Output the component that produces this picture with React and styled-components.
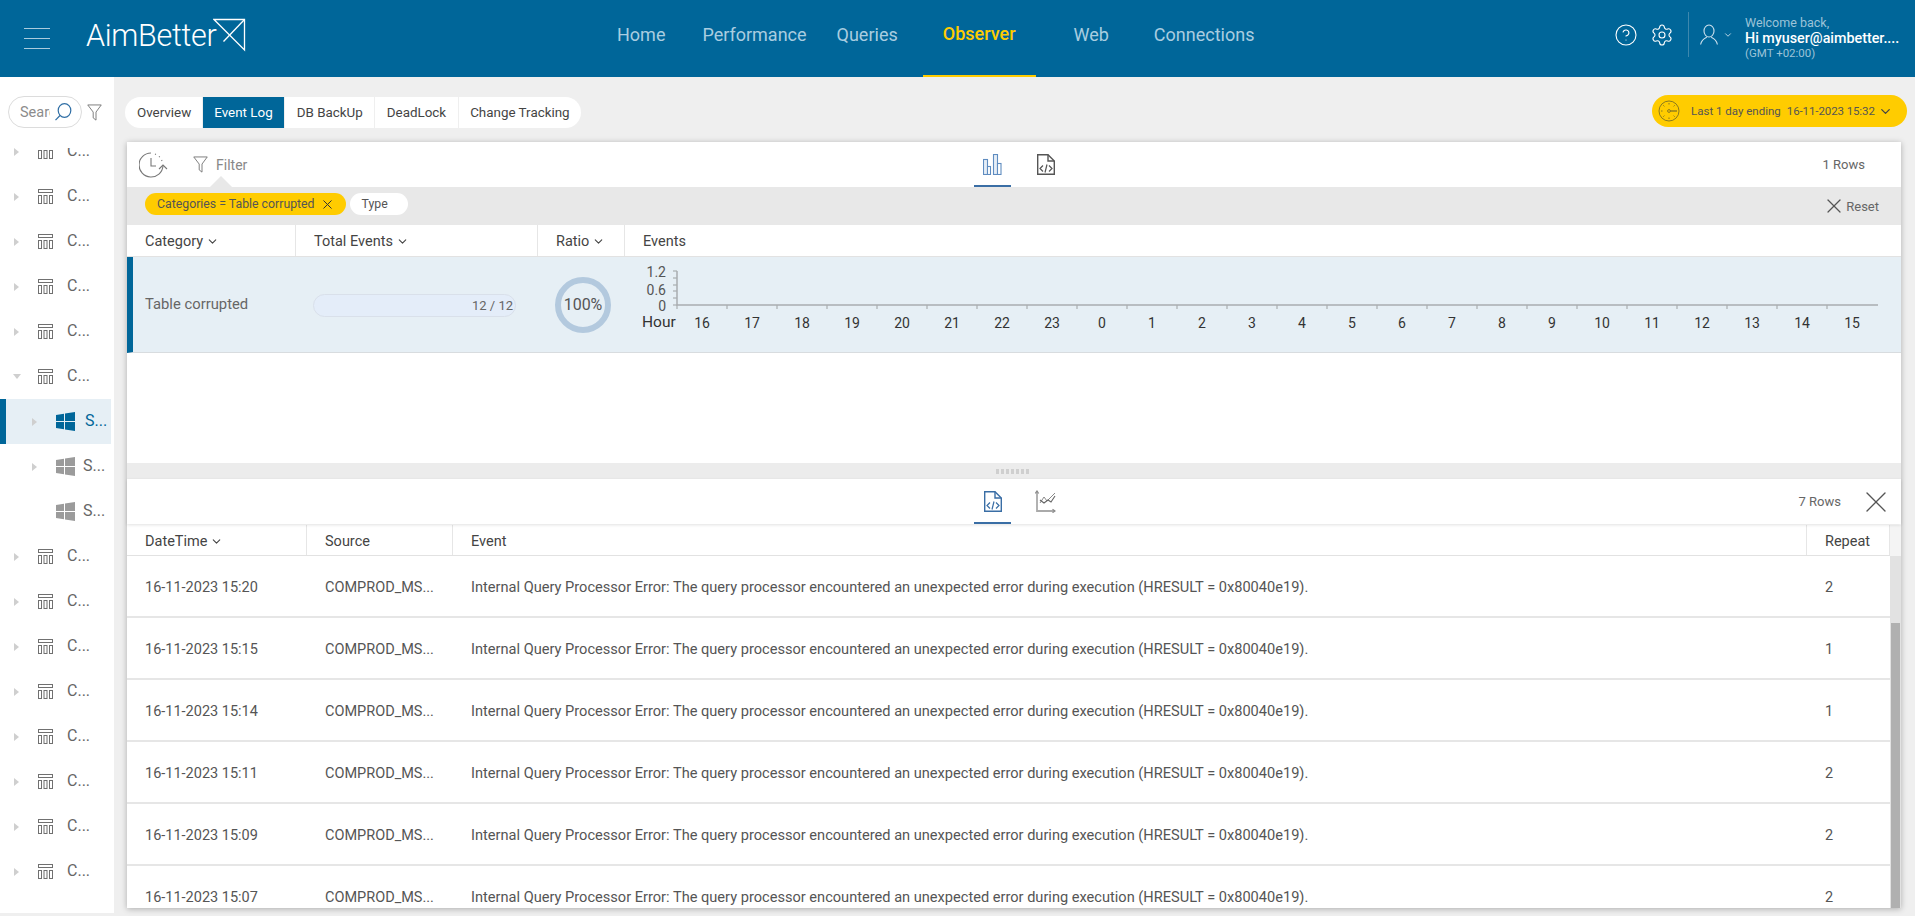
import React from 'react'
import styled, { createGlobalStyle } from 'styled-components'
import { CircleHelp, Settings, ChevronDown, X } from 'lucide-react'

const navLinks = [
  { text: 'Home', gap: 0 },
  { text: 'Performance', gap: 37 },
  { text: 'Queries', gap: 30 },
  { text: 'Observer', gap: 25, active: true },
  { text: 'Web', gap: 38 },
  { text: 'Connections', gap: 45 },
]

const subTabs = ['Overview', 'Event Log', 'DB BackUp', 'DeadLock', 'Change Tracking']
const hours = [16, 17, 18, 19, 20, 21, 22, 23, 0, 1, 2, 3, 4, 5, 6, 7, 8, 9, 10, 11, 12, 13, 14, 15]

const treeRows = [
  { label: 'C...', kind: 'group', arrow: 'right' },
  { label: 'C...', kind: 'group', arrow: 'right' },
  { label: 'C...', kind: 'group', arrow: 'right' },
  { label: 'C...', kind: 'group', arrow: 'right' },
  { label: 'C...', kind: 'group', arrow: 'right' },
  { label: 'C...', kind: 'group', arrow: 'down' },
  { label: 'S...', kind: 'server', arrow: 'right', selected: true },
  { label: 'S...', kind: 'server', arrow: 'right' },
  { label: 'S...', kind: 'server' },
  { label: 'C...', kind: 'group', arrow: 'right' },
  { label: 'C...', kind: 'group', arrow: 'right' },
  { label: 'C...', kind: 'group', arrow: 'right' },
  { label: 'C...', kind: 'group', arrow: 'right' },
  { label: 'C...', kind: 'group', arrow: 'right' },
  { label: 'C...', kind: 'group', arrow: 'right' },
  { label: 'C...', kind: 'group', arrow: 'right' },
  { label: 'C...', kind: 'group', arrow: 'right' },
]

const eventRows = [
  { time: '16-11-2023 15:20', repeat: 2 },
  { time: '16-11-2023 15:15', repeat: 1 },
  { time: '16-11-2023 15:14', repeat: 1 },
  { time: '16-11-2023 15:11', repeat: 2 },
  { time: '16-11-2023 15:09', repeat: 2 },
  { time: '16-11-2023 15:07', repeat: 2 },
]

const eventText =
  'Internal Query Processor Error: The query processor encountered an unexpected error during execution (HRESULT = 0x80040e19).'

const LogoMark = () => (
  <svg width="33" height="34" viewBox="0 0 33 34" fill="none" stroke="#fff" strokeWidth="1.3">
    <path d="M1 1.5 H31.5 V32 L1 1.5 Z" />
    <path d="M31.5 1.5 L10.5 23.5" />
  </svg>
)

const GroupIcon = () => (
  <svg width="15" height="15" viewBox="0 0 15 15" fill="none" stroke="#707070" strokeWidth="1">
    <rect x="0.5" y="0.5" width="14" height="3" />
    <rect x="0.5" y="6.5" width="3" height="8" />
    <rect x="6" y="6.5" width="3" height="8" />
    <rect x="11.5" y="6.5" width="3" height="8" />
  </svg>
)

const WindowsIcon = ({ color }) => (
  <svg width="19" height="19" viewBox="0 0 19 19" fill={color}>
    <path d="M0 3 L8 1.8 V9 H0 Z" />
    <path d="M9 1.6 L19 0 V9 H9 Z" />
    <path d="M0 10 H8 V17.2 L0 16 Z" />
    <path d="M9 10 H19 V19 L9 17.4 Z" />
  </svg>
)

const FunnelIcon = ({ size = 16 }) => (
  <svg width={size} height={size * 1.15} viewBox="0 0 16 18" fill="none" stroke="#777" strokeWidth="1">
    <path d="M0.8 0.8 H15.2 L9.6 8.4 V17 L6.6 14.6 V8.4 Z" />
  </svg>
)

const SearchIcon = () => (
  <svg width="18" height="18" viewBox="0 0 18 18" fill="none" stroke="#2f6ea5" strokeWidth="1.2">
    <ellipse cx="10.5" cy="7.5" rx="6.3" ry="6.8" />
    <path d="M6 12.5 L1.5 17.2" />
  </svg>
)

const HistoryIcon = () => (
  <svg width="29" height="26" viewBox="0 0 29 26" fill="none" stroke="#777" strokeWidth="1.1">
    <path d="M12 1 A12 12 0 1 0 24 14" />
    <path d="M12 6 V14 H17" />
    <path d="M16 2 L17 2.4 M20 4.4 L20.8 5.2 M22.6 8 L23 9" />
    <path d="M20 17 L24 13 L28 17" />
  </svg>
)

const GaugeIcon = () => (
  <svg width="22" height="22" viewBox="0 0 22 22" fill="none" stroke="#8a7a20" strokeWidth="1">
    <circle cx="11" cy="11" r="10" />
    <circle cx="11" cy="11" r="1.4" />
    <path d="M12 11 H19" strokeWidth="1.4" />
    <path d="M11 3 V4.5 M5.3 5.3 L6.4 6.4 M3 11 H4.5 M5.3 16.7 L6.4 15.6 M11 19 V17.5 M16.7 16.7 L15.6 15.6 M16.7 5.3 L15.6 6.4" />
  </svg>
)

const BarsIcon = () => (
  <svg width="19" height="21" viewBox="0 0 19 21" fill="#e6eef7" stroke="#5f8cc0" strokeWidth="1.1">
    <rect x="0.5" y="5.5" width="4" height="15" />
    <rect x="4.5" y="12.5" width="3" height="8" fill="#fff" />
    <rect x="10.5" y="0.5" width="4" height="20" />
    <rect x="14.5" y="9.5" width="3.5" height="11" fill="#fff" />
  </svg>
)

const FileCodeIcon = ({ color }) => (
  <svg width="18" height="21" viewBox="0 0 18 21" fill="none" stroke={color} strokeWidth="1.4">
    <path d="M0.7 0.7 H11 L17.3 7 V20.3 H0.7 Z" />
    <path d="M11 0.7 V7 H17.3" />
    <path d="M6 11.5 L3 14.5 L6 17.5 M12 11.5 L15 14.5 L12 17.5 M10 10.5 L8 18.5" strokeWidth="1.2" />
  </svg>
)

const TrendIcon = () => (
  <svg width="21" height="23" viewBox="0 0 21 23" fill="none" stroke="#8a8a8a" strokeWidth="1">
    <path d="M2 1 V21 H20" strokeWidth="1.8" stroke="#aaa" />
    <path d="M0.3 3.5 L2 1 L3.7 3.5 M17.5 19.3 L20 21 L17.5 22.7" strokeWidth="1.2" />
    <path d="M5 13 L9 7 L12 11 L20 3" />
    <path d="M5 10 L9 13 L13 10 L16 12 L20 6" stroke="#666" strokeWidth="1.1" />
  </svg>
)

const UserIcon = () => (
  <svg width="18" height="21" viewBox="0 0 18 21" fill="none" stroke="#cfe2ee" strokeWidth="1.1">
    <ellipse cx="9" cy="7" rx="5" ry="6" />
    <path d="M0.6 20.5 C1.5 15.5 5 14 6.8 13.2 M17.4 20.5 C16.5 15.5 13 14 11.2 13.2" />
  </svg>
)

const EventChart = () => (
  <ChartSvg width="1277" height="96" viewBox="0 0 1277 96">
    <path d="M53 14 V48 H1254" stroke="#a9adb0" strokeWidth="1.5" fill="none" />
    {[14, 21, 28, 34, 41].map((y) => (
      <path key={y} d={`M49 ${y} H53`} stroke="#a9adb0" strokeWidth="1.2" />
    ))}
    <path d="M49 48 H53" stroke="#a9adb0" strokeWidth="1.2" />
    {hours.map((h, i) => (
      <path key={`tick-${i}`} d={`M${53 + i * 50} 48 V52`} stroke="#a9adb0" strokeWidth="1.2" />
    ))}
    <ChartLabel x="42" y="20" textAnchor="end" fill="#555">1.2</ChartLabel>
    <ChartLabel x="42" y="38" textAnchor="end" fill="#555">0.6</ChartLabel>
    <ChartLabel x="42" y="54" textAnchor="end" fill="#555">0</ChartLabel>
    <HourLabel x="18" y="70">Hour</HourLabel>
    {hours.map((h, i) => (
      <ChartLabel key={`hour-${i}`} x={78 + i * 50} y="71" textAnchor="middle" fill="#333">
        {h}
      </ChartLabel>
    ))}
  </ChartSvg>
)

const App = () => {
  return (
    <>
      <GlobalStyle />
      <Page>
        <Header>
          <Burger>
            <span />
            <span />
            <span />
          </Burger>
          <Logo>
            <LogoText>AimBetter</LogoText>
            <LogoMark />
          </Logo>
          <Nav>
            {navLinks.map((link) => (
              <NavItem key={link.text} $gap={link.gap} $active={link.active}>
                {link.text}
              </NavItem>
            ))}
          </Nav>
          <HeaderRight>
            <CircleHelp size={24} strokeWidth={1.1} color="#fff" />
            <Settings size={24} strokeWidth={1.1} color="#fff" />
            <Divider />
            <UserIcon />
            <ChevronDown size={10} strokeWidth={2.4} color="#b5d2e2" />
            <UserText>
              <small>Welcome back,</small>
              <strong>Hi myuser@aimbetter....</strong>
              <em>(GMT +02:00)</em>
            </UserText>
          </HeaderRight>
        </Header>
        <Body>
          <Sidebar>
            <SearchRow>
              <SearchPill>
                <SearchInput placeholder="Search" />
                <SearchIcon />
              </SearchPill>
              <FunnelIcon size={15} />
            </SearchRow>
            <Tree>
              {treeRows.map((row, i) => (
                <TreeRow key={i} $server={row.kind === 'server'} $selected={row.selected}>
                  <Arrow $dir={row.arrow} />
                  {row.kind === 'group' ? (
                    <GroupIcon />
                  ) : (
                    <WindowsIcon color={row.selected ? '#006699' : '#9b9b9b'} />
                  )}
                  <TreeLabel $server={row.kind === 'server'} $selected={row.selected}>
                    {row.label}
                  </TreeLabel>
                </TreeRow>
              ))}
            </Tree>
          </Sidebar>
          <Main>
            <TopBar>
              <Tabs>
                {subTabs.map((tab) => (
                  <Tab key={tab} $active={tab === 'Event Log'}>
                    {tab}
                  </Tab>
                ))}
              </Tabs>
              <DatePill>
                <GaugeIcon />
                <span>Last 1 day ending</span>
                <span>16-11-2023 15:32</span>
                <ChevronDown size={15} strokeWidth={2} color="#444" />
              </DatePill>
            </TopBar>
            <Panel>
              <Toolbar $h={45}>
                <ToolbarLeft>
                  <HistoryIcon />
                  <FilterToggle>
                    <FunnelIcon size={15} />
                    <span>Filter</span>
                  </FilterToggle>
                </ToolbarLeft>
                <ViewTabs>
                  <ViewTab $active>
                    <BarsIcon />
                  </ViewTab>
                  <ViewTab>
                    <FileCodeIcon color="#555" />
                  </ViewTab>
                </ViewTabs>
                <RowCount $right={36}>1 Rows</RowCount>
              </Toolbar>
              <FilterBar>
                <Chip $active>
                  Categories = Table corrupted
                  <X size={15} strokeWidth={1.6} color="#333" />
                </Chip>
                <Chip>Type</Chip>
                <ResetBtn>
                  <X size={24} strokeWidth={1.2} color="#555" />
                  Reset
                </ResetBtn>
              </FilterBar>
              <UpperArea>
                <HeadRow $cols="169px 242px 87px 1fr" $h={32}>
                  <HeadCell>Category<ChevronDown size={13} strokeWidth={2} /></HeadCell>
                  <HeadCell>Total Events<ChevronDown size={13} strokeWidth={2} /></HeadCell>
                  <HeadCell>Ratio<ChevronDown size={13} strokeWidth={2} /></HeadCell>
                  <HeadCell $last>Events</HeadCell>
                </HeadRow>
                <SelectedRow>
                  <CategoryCell>Table corrupted</CategoryCell>
                  <BarCell>
                    <Progress>12 / 12</Progress>
                  </BarCell>
                  <RatioCell>
                    <Ring>100%</Ring>
                  </RatioCell>
                  <EventChart />
                </SelectedRow>
              </UpperArea>
              <Splitter>
                <Grip />
              </Splitter>
              <Toolbar $h={45} $shadow>
                <ToolbarLeft />
                <ViewTabs>
                  <ViewTab $active>
                    <FileCodeIcon color="#3a6ea5" />
                  </ViewTab>
                  <ViewTab>
                    <TrendIcon />
                  </ViewTab>
                </ViewTabs>
                <RowCount $right={7}>
                  7 Rows
                  <X size={36} strokeWidth={0.9} color="#555" />
                </RowCount>
              </Toolbar>
              <LowerArea>
                <EventsTable>
                  <HeadRow $cols="180px 146px 1fr 83px" $h={31}>
                    <HeadCell>DateTime<ChevronDown size={13} strokeWidth={2} /></HeadCell>
                    <HeadCell>Source</HeadCell>
                    <HeadCell>Event</HeadCell>
                    <HeadCell>Repeat</HeadCell>
                  </HeadRow>
                  {eventRows.map((row) => (
                    <EventRow key={row.time}>
                      <span>{row.time}</span>
                      <span>COMPROD_MS...</span>
                      <EventText>{eventText}</EventText>
                      <span>{row.repeat}</span>
                    </EventRow>
                  ))}
                </EventsTable>
                <Scrollbar>
                  <ScrollCorner />
                  <ScrollTrack>
                    <ScrollThumb />
                  </ScrollTrack>
                </Scrollbar>
              </LowerArea>
            </Panel>
          </Main>
        </Body>
      </Page>
    </>
  )
}

export default App

const GlobalStyle = createGlobalStyle`
  * {
    box-sizing: border-box;
  }
  body {
    margin: 0;
    background: #efefef;
    font-family: Roboto, "Liberation Sans", sans-serif;
    overflow: hidden;
  }
`

const Page = styled.div`
  height: 916px;
  display: flex;
  flex-direction: column;
`

const Header = styled.header`
  height: 77px;
  flex: none;
  display: flex;
  align-items: stretch;
  background: #006699;
  color: #fff;
`

const Burger = styled.div`
  width: 26px;
  margin-left: 24px;
  display: flex;
  flex-direction: column;
  justify-content: center;
  gap: 8.5px;
  span {
    height: 1.5px;
    background: #a9cbdd;
  }
`

const Logo = styled.div`
  margin-left: 36px;
  width: 163px;
  display: flex;
  align-items: flex-start;
  padding-top: 18px;
`

const LogoText = styled.span`
  font-size: 30.5px;
  font-weight: 300;
  line-height: 36px;
  letter-spacing: -0.3px;
  margin-right: -3px;
`

const Nav = styled.nav`
  margin-left: 368px;
  display: flex;
  align-items: stretch;
`

const NavItem = styled.a`
  display: flex;
  align-items: center;
  padding: 0 ${(p) => (p.$active ? '20px' : '0')};
  margin-left: ${(p) => p.$gap}px;
  font-size: 18px;
  height: 77px;
  padding-bottom: 8px;
  color: ${(p) => (p.$active ? '#ffcc00' : '#a9cde0')};
  font-weight: ${(p) => (p.$active ? 500 : 400)};
  border-bottom: ${(p) => (p.$active ? '2px solid #ffcc00' : 'none')};
`

const HeaderRight = styled.div`
  margin-left: auto;
  margin-right: 28px;
  display: flex;
  align-items: center;
  padding-bottom: 8px;
  svg:nth-of-type(2) {
    margin-left: 12px;
  }
  svg:nth-of-type(4) {
    margin-left: 5px;
  }
`

const Divider = styled.div`
  width: 1px;
  height: 45px;
  margin: 0 11px 0 14px;
  background: #3d88ae;
`

const UserText = styled.div`
  margin: 7px 0 0 12px;
  display: flex;
  flex-direction: column;
  width: 142px;
  white-space: nowrap;
  small {
    font-size: 12.5px;
    line-height: 15px;
    color: #9cc3d8;
  }
  strong {
    font-size: 14.3px;
    line-height: 16px;
    font-weight: 500;
    color: #fff;
  }
  em {
    font-size: 11.5px;
    line-height: 15px;
    font-style: normal;
    color: #9cc3d8;
  }
`

const Body = styled.div`
  flex: 1;
  min-height: 0;
  display: flex;
`

const Sidebar = styled.aside`
  width: 114px;
  flex: none;
  height: 836px;
  background: #fff;
  display: flex;
  flex-direction: column;
`

const SearchRow = styled.div`
  flex: none;
  height: 71px;
  padding: 19px 0 0 8px;
  display: flex;
  align-items: flex-start;
  gap: 5px;
  > svg {
    margin-top: 8px;
  }
`

const SearchPill = styled.div`
  width: 74px;
  height: 32px;
  border: 1px solid #dcdcdc;
  border-radius: 16px;
  display: flex;
  align-items: center;
  padding-left: 11px;
  gap: 4px;
`

const SearchInput = styled.input`
  width: 30px;
  padding: 0;
  border: 0;
  outline: 0;
  background: transparent;
  font-family: inherit;
  font-size: 14.5px;
  &::placeholder {
    color: #8c8c8c;
    opacity: 1;
  }
`

const Tree = styled.div`
  flex: 1;
  min-height: 0;
  overflow: hidden;
  padding-right: 3px;
  > div:first-child {
    margin-top: -19px;
  }
`

const TreeRow = styled.div`
  height: 45px;
  display: flex;
  align-items: center;
  padding-left: ${(p) => (p.$server ? (p.$selected ? '26px' : '32px') : '14px')};
  background: ${(p) => (p.$selected ? '#e6eff5' : 'transparent')};
  border-left: ${(p) => (p.$selected ? '6px solid #006699' : 'none')};
`

const Arrow = styled.i`
  flex: none;
  width: 5px;
  height: 8px;
  margin-right: 19px;
  ${(p) =>
    p.$dir === 'right' &&
    `
    border-left: 5px solid #cfcfcf;
    border-top: 4px solid transparent;
    border-bottom: 4px solid transparent;
  `}
  ${(p) =>
    p.$dir === 'down' &&
    `
    width: 8px;
    height: 5px;
    margin-left: -1px;
    margin-right: 17px;
    border-top: 5px solid #cfcfcf;
    border-left: 4px solid transparent;
    border-right: 4px solid transparent;
  `}
`

const TreeLabel = styled.span`
  margin-left: ${(p) => (p.$selected ? '10px' : p.$server ? '8px' : '14px')};
  padding-bottom: 3px;
  font-size: 16px;
  color: ${(p) => (p.$selected ? '#006699' : '#666')};
`

const Main = styled.main`
  flex: 1;
  min-width: 0;
  display: flex;
  flex-direction: column;
`

const TopBar = styled.div`
  flex: none;
  height: 65px;
  padding: 20px 8px 0 11px;
  display: flex;
  align-items: flex-start;
  justify-content: space-between;
`

const Tabs = styled.div`
  height: 31px;
  display: flex;
  gap: 1px;
  border-radius: 16px;
  overflow: hidden;
  background: #efefef;
`

const Tab = styled.div`
  padding: 0 11.5px;
  display: flex;
  align-items: center;
  font-size: 13.4px;
  color: ${(p) => (p.$active ? '#fff' : '#444')};
  background: ${(p) => (p.$active ? '#006699' : '#fff')};
  &:first-child {
    padding: 0 10.5px 0 12px;
  }
  &:last-child {
    padding-right: 11px;
  }
`

const DatePill = styled.div`
  width: 255px;
  height: 32px;
  margin-top: -2px;
  padding-left: 6px;
  border-radius: 16px;
  background: #ffcc00;
  display: flex;
  align-items: center;
  font-size: 11.5px;
  color: #555;
  span:nth-of-type(1) {
    margin-left: 11px;
  }
  span:nth-of-type(2) {
    margin-left: 6px;
    letter-spacing: -0.1px;
  }
  svg:last-child {
    margin-left: 3px;
  }
`

const Panel = styled.section`
  width: 1774px;
  height: 766px;
  margin-left: 13px;
  background: #fff;
  box-shadow: 0 1px 6px rgba(0, 0, 0, 0.28);
  display: flex;
  flex-direction: column;
`

const Toolbar = styled.div`
  flex: none;
  height: ${(p) => p.$h}px;
  display: grid;
  grid-template-columns: 847px auto 1fr;
  align-items: stretch;
  box-shadow: ${(p) => (p.$shadow ? '0 1px 3px rgba(0, 0, 0, 0.12)' : 'none')};
  position: relative;
`

const ToolbarLeft = styled.div`
  display: flex;
  align-items: center;
  padding-left: 12px;
  gap: 25px;
`

const FilterToggle = styled.div`
  position: relative;
  display: flex;
  align-items: center;
  gap: 8px;
  font-size: 14px;
  color: #888;
  height: 100%;
  &::after {
    content: '';
    position: absolute;
    left: 17px;
    bottom: 0;
    border-left: 11px solid transparent;
    border-right: 11px solid transparent;
    border-bottom: 11px solid #e8e8e8;
  }
`

const ViewTabs = styled.div`
  display: flex;
  gap: 16px;
`

const ViewTab = styled.div`
  width: 37px;
  display: flex;
  align-items: center;
  justify-content: center;
  padding-top: 2px;
  border-bottom: 2px solid ${(p) => (p.$active ? '#3a6ea5' : 'transparent')};
`

const RowCount = styled.div`
  display: flex;
  align-items: center;
  justify-content: flex-end;
  gap: 17px;
  padding-right: ${(p) => p.$right}px;
  font-size: 13px;
  color: #666;
`

const FilterBar = styled.div`
  flex: none;
  height: 38px;
  padding-left: 18px;
  background: #e8e8e8;
  display: flex;
  align-items: center;
  gap: 4px;
`

const Chip = styled.div`
  height: 22px;
  margin-bottom: 4px;
  padding: 0 ${(p) => (p.$active ? '11px' : '20px')} 0 12px;
  border-radius: 11px;
  display: flex;
  align-items: center;
  gap: 5px;
  font-size: 12.3px;
  color: #555;
  background: ${(p) => (p.$active ? '#ffcc00' : '#fff')};
`

const ResetBtn = styled.div`
  margin-left: auto;
  margin-right: 22px;
  display: flex;
  align-items: center;
  font-size: 13px;
  color: #666;
`

const UpperArea = styled.div`
  flex: none;
  height: 238px;
`

const HeadRow = styled.div`
  height: ${(p) => p.$h}px;
  display: grid;
  grid-template-columns: ${(p) => p.$cols};
  border-bottom: 1px solid #e2e2e2;
`

const HeadCell = styled.div`
  display: flex;
  align-items: center;
  gap: 3px;
  padding: 2px 0 0 18px;
  font-size: 14.5px;
  color: #444;
  border-right: ${(p) => (p.$last ? 'none' : '1px solid #e6e6e6')};
`

const SelectedRow = styled.div`
  height: 96px;
  display: grid;
  grid-template-columns: 163px 242px 87px 1fr;
  align-items: center;
  background: #e6eff5;
  border-left: 6px solid #006699;
  border-bottom: 1px solid #d8dcdf;
`

const CategoryCell = styled.div`
  padding: 0 0 2px 12px;
  font-size: 14.8px;
  color: #666;
`

const BarCell = styled.div`
  padding-left: 17px;
`

const Progress = styled.div`
  width: 203px;
  height: 23px;
  padding-right: 2px;
  border: 1px solid #d9e0ea;
  border-radius: 12px;
  background: #e4edf9;
  display: flex;
  align-items: center;
  justify-content: flex-end;
  font-size: 13px;
  color: #666;
`

const RatioCell = styled.div`
  padding-left: 17px;
`

const Ring = styled.div`
  width: 56px;
  height: 56px;
  padding-bottom: 2px;
  border: 6px solid #b3c9de;
  border-radius: 50%;
  display: flex;
  align-items: center;
  justify-content: center;
  font-size: 16px;
  color: #555;
`

const ChartSvg = styled.svg`
  display: block;
  margin-left: -1px;
`

const ChartLabel = styled.text`
  font-family: Roboto, "Liberation Sans", sans-serif;
  font-size: 14px;
`

const HourLabel = styled.text`
  font-family: Roboto, "Liberation Sans", sans-serif;
  font-size: 15.5px;
  fill: #333;
`

const Splitter = styled.div`
  flex: none;
  height: 16px;
  background: #ececec;
  display: flex;
  align-items: center;
  justify-content: center;
`

const Grip = styled.div`
  width: 35px;
  height: 5px;
  margin-left: -1px;
  background: repeating-linear-gradient(90deg, #cfcfcf 0 3px, transparent 3px 5px);
`

const LowerArea = styled.div`
  flex: 1;
  min-height: 0;
  margin-top: 1px;
  display: flex;
  overflow: hidden;
`

const EventsTable = styled.div`
  flex: 1;
  min-width: 0;
  overflow: hidden;
`

const EventRow = styled.div`
  height: 62px;
  padding-top: 2px;
  display: grid;
  grid-template-columns: 180px 146px 1fr 83px;
  align-items: center;
  border-bottom: 2px solid #e6e6e6;
  font-size: 14.5px;
  color: #555;
  span {
    padding-left: 18px;
    white-space: nowrap;
  }
`

const EventText = styled.span`
  font-size: 14.6px;
`

const Scrollbar = styled.div`
  width: 11px;
  flex: none;
  display: flex;
  flex-direction: column;
`

const ScrollCorner = styled.div`
  flex: none;
  height: 31px;
  background: #f4f4f4;
`

const ScrollTrack = styled.div`
  flex: 1;
  background: #e2e2e2;
  padding: 67px 1px 0;
`

const ScrollThumb = styled.div`
  height: 100%;
  background: #b0b0b0;
`
